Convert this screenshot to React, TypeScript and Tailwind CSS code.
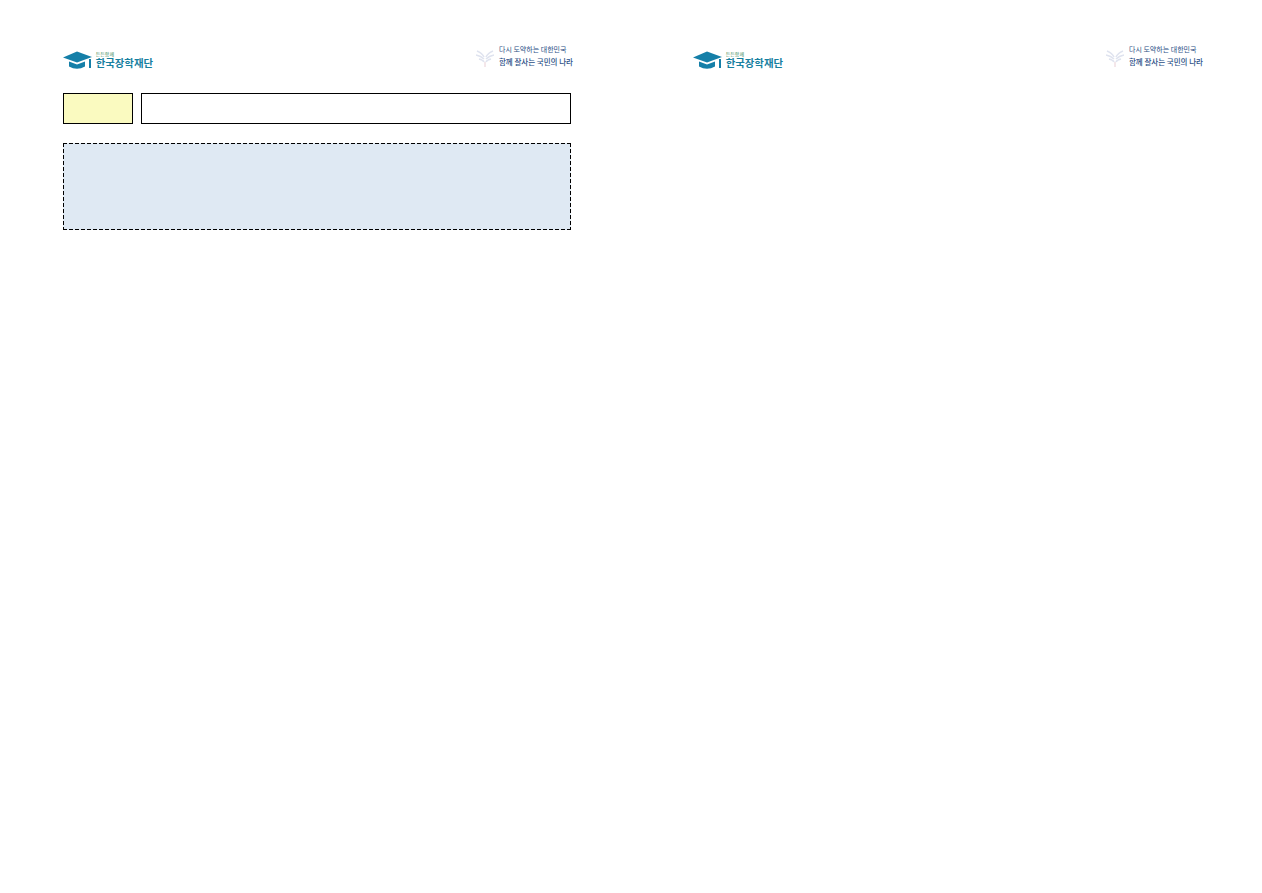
function Cap() {
  return (
    <svg width="29" height="20" viewBox="0 0 29 20" className="shrink-0">
      <path d="M0 7.5 L14 1.5 L29 7 L14 12.5 Z" fill="#157fa8" />
      <path d="M6 11.5 L14 14.5 L22 11.5 L22 16.5 Q14 21 6 16.5 Z" fill="#157fa8" />
    </svg>
  );
}

function Header() {
  return (
    <div className="flex h-[31px] items-start justify-between w-[510px]">
      <div className="flex items-center mt-[6px] w-[90px]">
        <Cap />
        <span className="w-[2px] h-[9px] bg-[#157fa8] mt-[7px] ml-[-3px] mr-[5px]" />
        <div className="flex flex-col">
          <span className="text-[5px] leading-[6px] text-[#3b8c5a] font-['Noto_Sans_CJK_KR',sans-serif]">든든함께</span>
          <span className="text-[10.4px] leading-[12px] font-bold whitespace-nowrap text-[#17809f] font-['Noto_Sans_CJK_KR',sans-serif]">한국장학재단</span>
        </div>
      </div>
      <div className="flex items-center mt-[-1px]">
        <svg width="18" height="21" viewBox="0 0 18 21" className="mr-[5px] mt-[3px]">
          <g stroke="#dfe3ef" strokeWidth="1.6" fill="none">
            <path d="M1 4 Q6 6 8 10" />
            <path d="M17 4 Q12 6 10 10" />
            <path d="M0 8 Q5 9 8 12" />
            <path d="M18 8 Q13 9 10 12" />
            <path d="M3 12 Q7 13 8 15" />
            <path d="M15 12 Q11 13 10 15" />
          </g>
          <path d="M9 15 V20" stroke="#f0dfe3" strokeWidth="1.5" />
        </svg>
        <div className="flex flex-col text-[#2c4f86] font-['Noto_Sans_CJK_KR',sans-serif] whitespace-nowrap">
          <span className="text-[7px] leading-[12px]">다시 도약하는 대한민국</span>
          <span className="text-[7.5px] leading-[13px] font-medium">함께 잘사는 국민의 나라</span>
        </div>
      </div>
    </div>
  );
}

function Page({ children }: { children?: React.ReactNode }) {
  return (
    <div className="w-[630px] shrink-0 pl-[63px] pt-[44px]">
      <Header />
      {children}
    </div>
  );
}

export default function App() {
  return (
    <div className="flex w-[1262px] h-[893px] bg-white overflow-hidden">
      <Page>
        <div className="w-[508px] mt-[18px]">
          <div className="flex gap-2 h-[31px]">
            <div className="w-[70px] border border-black bg-[#fafac0]" />
            <div className="flex-1 border border-black bg-white" />
          </div>
          <div className="h-[87px] mt-[19px] bg-[#dfe9f3] bg-[image:linear-gradient(90deg,#000_4px,transparent_4px),linear-gradient(90deg,#000_4px,transparent_4px),linear-gradient(180deg,#000_4px,transparent_4px),linear-gradient(180deg,#000_4px,transparent_4px)] bg-[size:6px_1px,6px_1px,1px_6px,1px_6px] bg-[position:0_0,0_100%,0_0,100%_0] [background-repeat:repeat-x,repeat-x,repeat-y,repeat-y]" />
        </div>
      </Page>
      <Page />
    </div>
  );
}
